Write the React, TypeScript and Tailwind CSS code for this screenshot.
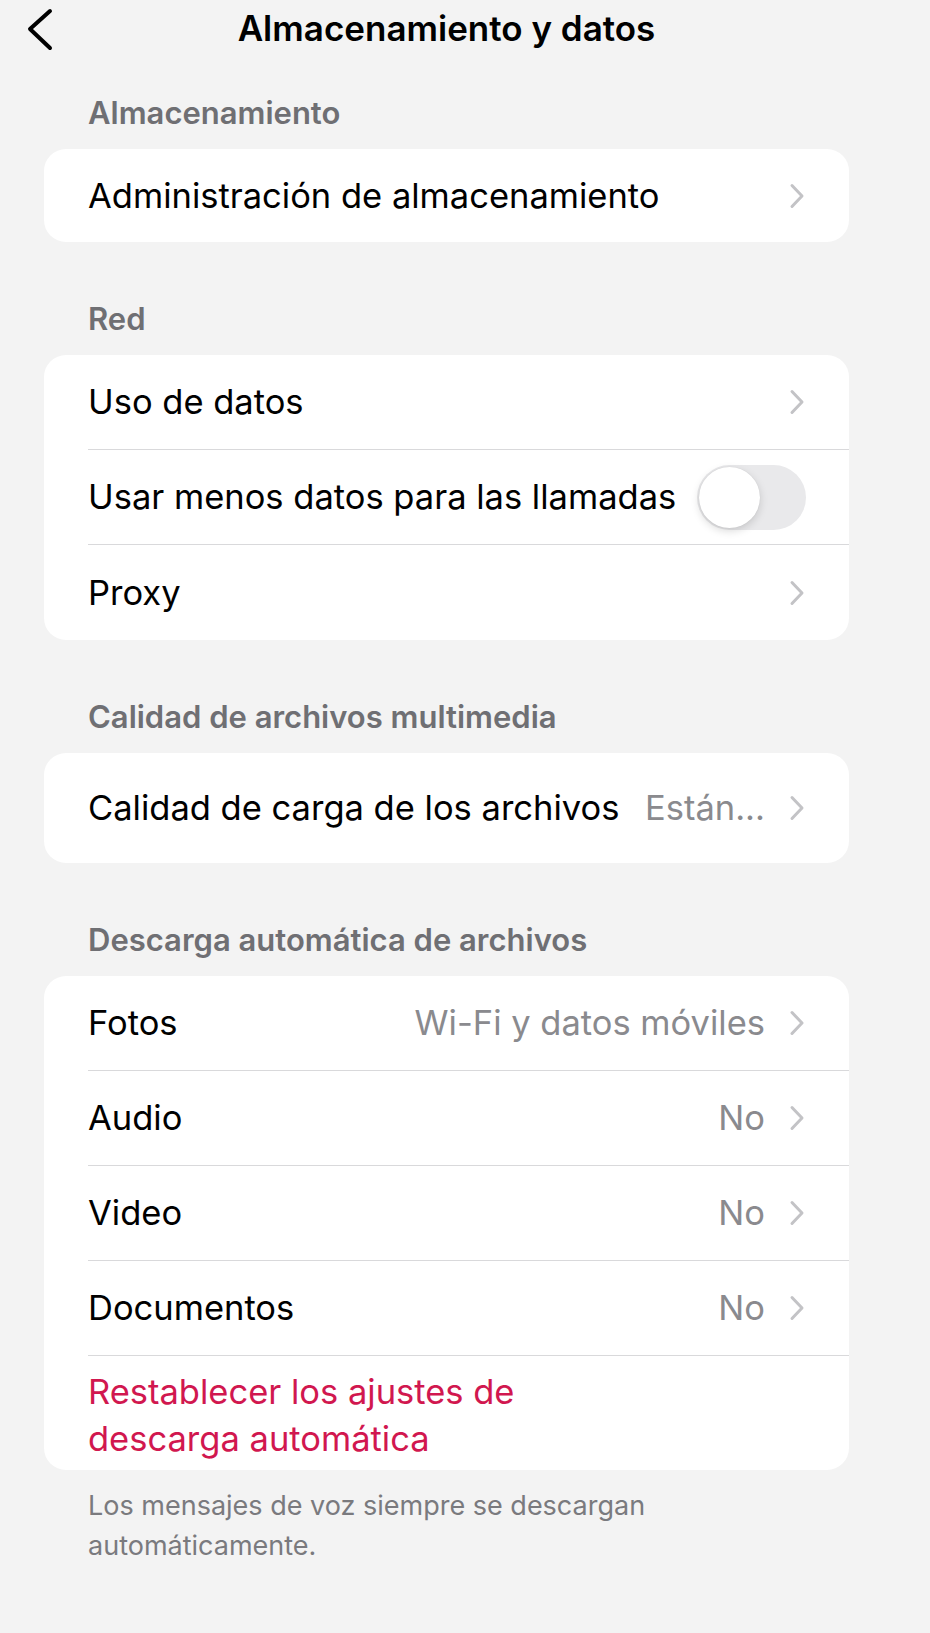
import React from "react";

const font = { fontFamily: "Inter, 'Noto Sans', sans-serif" };

function Chevron() {
  return (
    <svg width="16" height="26" viewBox="0 0 16 26" className="shrink-0">
      <path d="M3 2.5 L13 13 L3 23.5" fill="none" stroke="#c3c3c6" strokeWidth="3" strokeLinecap="round" strokeLinejoin="round" />
    </svg>
  );
}

function Toggle() {
  return (
    <div className="relative h-[65px] w-[109px] shrink-0 rounded-full bg-[#e9e9eb]">
      <div className="absolute left-[2px] top-[2px] h-[61px] w-[61px] rounded-full bg-white shadow-[0_3px_8px_rgba(0,0,0,0.15),0_0_1px_rgba(0,0,0,0.12)]" />
    </div>
  );
}

interface RowProps {
  label: string;
  value?: string;
  toggle?: boolean;
  divider?: boolean;
  height?: string;
}

function Row({ label, value, toggle, divider = true, height = "h-[95px]" }: RowProps) {
  return (
    <div className={`flex ${height} items-center ${divider ? "border-b border-[#d9d9db]" : ""}`}>
      <span className="flex-1 whitespace-nowrap text-[34.5px] text-black">{label}</span>
      {value && <span className="mr-[24px] whitespace-nowrap text-[34.5px] text-[#8a8a8e]">{value}</span>}
      {toggle ? (
        <div className="mr-[43px]">
          <Toggle />
        </div>
      ) : (
        <div className="mr-[44px]">
          <Chevron />
        </div>
      )}
    </div>
  );
}

function Header({ children, top = "mt-[60px]" }: { children: React.ReactNode; top?: string }) {
  return (
    <div className={`${top} mb-[19px] pl-[44px] text-[31px] font-semibold leading-[34px] text-[#6f6f73]`}>
      {children}
    </div>
  );
}

function Card({ children }: { children: React.ReactNode }) {
  return <div className="overflow-hidden rounded-[22px] bg-white pl-[44px]">{children}</div>;
}

export default function App() {
  return (
    <div className="min-h-[1633px] w-[930px] bg-[#f3f3f3] pl-[44px] pr-[81px]" style={font}>
      <div className="relative flex h-[56px] items-center justify-center">
        <svg width="30" height="44" viewBox="0 0 30 44" className="absolute left-[-20px] top-[8px]">
          <path d="M26 3 L6 21 L26 40" fill="none" stroke="#000" strokeWidth="4" strokeLinecap="round" strokeLinejoin="round" />
        </svg>
        <span className="text-[35px] font-semibold text-black">Almacenamiento y datos</span>
      </div>

      <Header top="mt-[40px]">Almacenamiento</Header>
      <Card>
        <Row label="Administración de almacenamiento" divider={false} height="h-[93px]" />
      </Card>

      <Header>Red</Header>
      <Card>
        <Row label="Uso de datos" />
        <Row label="Usar menos datos para las llamadas" toggle />
        <Row label="Proxy" divider={false} />
      </Card>

      <Header>Calidad de archivos multimedia</Header>
      <Card>
        <Row label="Calidad de carga de los archivos" value="Están..." divider={false} height="h-[110px]" />
      </Card>

      <Header>Descarga automática de archivos</Header>
      <Card>
        <Row label="Fotos" value="Wi-Fi y datos móviles" />
        <Row label="Audio" value="No" />
        <Row label="Video" value="No" />
        <Row label="Documentos" value="No" />
        <div className="pb-[8px] pt-[12px] text-[34.5px] leading-[47px] text-[#d1174f]">
          Restablecer los ajustes de
          <br />
          descarga automática
        </div>
      </Card>

      <div className="mt-[16px] pl-[44px] text-[27px] leading-[40px] text-[#7a7a7e]">
        Los mensajes de voz siempre se descargan
        <br />
        automáticamente.
      </div>
    </div>
  );
}
